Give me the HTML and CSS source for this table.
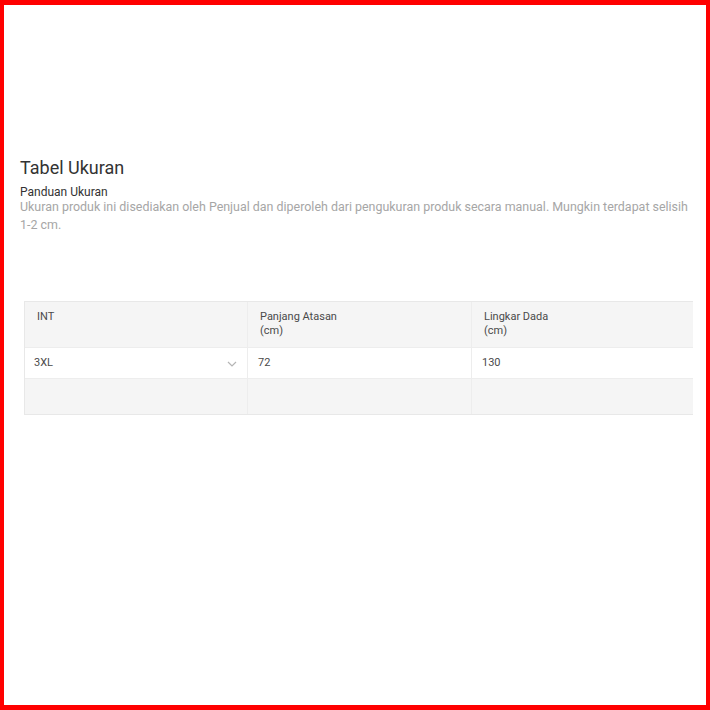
FILE: index.html
```html
<!DOCTYPE html>
<html lang="id">
<head>
<meta charset="utf-8">
<link rel="stylesheet" href="styles.css">
</head>
<body>
<div class="frame">
  <section class="size-guide">
    <h1 class="title">Tabel Ukuran</h1>
    <h2 class="subtitle">Panduan Ukuran</h2>
    <p class="desc">Ukuran produk ini disediakan oleh Penjual dan diperoleh dari pengukuran produk secara manual. Mungkin terdapat selisih 1-2 cm.</p>
    <div class="table-wrap">
      <div class="table">
        <div class="row head">
          <div class="cell">INT</div>
          <div class="cell">Panjang Atasan<br>(cm)</div>
          <div class="cell">Lingkar Dada<br>(cm)</div>
        </div>
        <div class="row data">
          <div class="cell select">3XL
            <svg class="chev" width="10" height="6" viewBox="0 0 10 6"><path d="M1 1l4 4 4-4" fill="none" stroke="#b5b5b5" stroke-width="1.2"/></svg>
          </div>
          <div class="cell">72</div>
          <div class="cell">130</div>
        </div>
        <div class="row empty">
          <div class="cell"></div>
          <div class="cell"></div>
          <div class="cell"></div>
        </div>
      </div>
    </div>
  </section>
</div>
</body>
</html>
```

FILE: styles.css
```css
* { box-sizing: border-box; }
html, body { margin: 0; padding: 0; }
body { font-family: Roboto, "Noto Sans", sans-serif; background: #fff; }
.frame {
  width: 710px;
  height: 710px;
  border: 5px solid #f00;
  border-left-width: 4px;
  border-right-width: 4px;
  background: #fff;
  overflow: hidden;
}
.size-guide {
  padding: 151px 0 0 16px;
}
.title {
  margin: 0;
  font-size: 18px;
  font-weight: 400;
  line-height: 24px;
  color: #333;
}
.subtitle {
  margin: 6px 0 0;
  font-size: 12px;
  font-weight: 400;
  line-height: 12px;
  color: #333;
}
.desc {
  margin: 0;
  width: 672px;
  font-size: 12.45px;
  line-height: 18px;
  color: #a6a6a6;
}
.table-wrap {
  margin: 67px 0 0 4px;
  width: 669px;
  overflow: hidden;
}
.table {
  width: 700px;
  border: 1px solid #e8e8e8;
  border-right: none;
}
.row {
  display: grid;
  grid-template-columns: 222px 224px 1fr;
}
.cell {
  border-left: 1px solid #ededed;
  font-size: 11px;
  line-height: 14px;
  color: #4a4a4a;
}
.cell:first-child { border-left: none; }
.head { background: #f5f5f5; height: 45px; }
.head .cell { padding: 8px 12px 0; }
.data { background: #fff; height: 32px; border-top: 1px solid #ededed; border-bottom: 1px solid #ededed; }
.data .cell { padding: 8px 10px 0; }
.data .select { padding-left: 9px; }
.select { display: flex; justify-content: space-between; align-items: flex-start; padding-right: 10px; }
.chev { margin-top: 5px; }
.empty { background: #f5f5f5; height: 35px; }
```
